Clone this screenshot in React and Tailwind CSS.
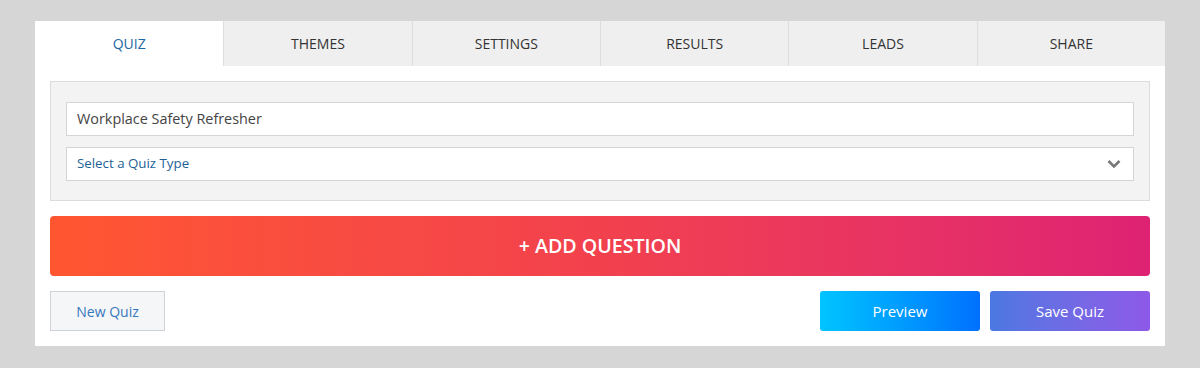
import React from "react";

const tabs = ["QUIZ", "THEMES", "SETTINGS", "RESULTS", "LEADS", "SHARE"];

export default function App() {
  return (
    <div className="w-[1200px] h-[368px] bg-[#d6d6d6] pt-[21px] pl-[35px]" style={{ fontFamily: '"Open Sans", "Noto Sans", sans-serif' }}>
      <div className="w-[1130px] h-[325px] bg-white">
        <div className="grid grid-cols-6 h-[45px]">
          {tabs.map((t, i) => (
            <div
              key={t}
              className={
                i === 0
                  ? "flex items-center justify-center bg-white text-[14px] text-[#1e66a3]"
                  : "flex items-center justify-center bg-[#efefef] border-l border-[#dedede] text-[14px] text-[#333]"
              }
            >
              {t}
            </div>
          ))}
        </div>
        <div className="px-[15px] pt-[15px]">
          <div className="bg-[#f3f3f3] border border-[#dcdcdc] px-[15px] pt-[20px] pb-[19px] flex flex-col gap-[11px]">
            <div className="h-[34px] bg-white border border-[#d4d4d4] flex items-center px-[10px] text-[14.4px] text-[#444]">
              Workplace Safety Refresher
            </div>
            <div className="h-[34px] bg-white border border-[#d4d4d4] flex items-center justify-between px-[10px] text-[13.3px] text-[#1e5f96]">
              <span>Select a Quiz Type</span>
              <svg width="14" height="10" viewBox="0 0 14 10" className="mr-[2px]">
                <path d="M1.5 2 L7 7.5 L12.5 2" fill="none" stroke="#777" strokeWidth="2.6" />
              </svg>
            </div>
          </div>
          <div className="mt-[15px] h-[60px] rounded-[4px] bg-gradient-to-r from-[#ff5630] via-[#f2414d] to-[#de2273] flex items-center justify-center text-white text-[19.6px] font-semibold">
            + ADD QUESTION
          </div>
          <div className="mt-[15px] flex items-center justify-between">
            <div className="w-[115px] h-[40px] bg-[#f5f6f8] border border-[#cfd2d6] flex items-center justify-center text-[14px] text-[#3577bd]">
              New Quiz
            </div>
            <div className="flex gap-[10px]">
              <div className="w-[160px] h-[40px] rounded-[3px] bg-gradient-to-r from-[#00c4ff] to-[#0070ff] flex items-center justify-center text-white text-[15px]">
                Preview
              </div>
              <div className="w-[160px] h-[40px] rounded-[3px] bg-gradient-to-r from-[#4a78e2] to-[#8d59e8] flex items-center justify-center text-white text-[15px]">
                Save Quiz
              </div>
            </div>
          </div>
        </div>
      </div>
    </div>
  );
}
